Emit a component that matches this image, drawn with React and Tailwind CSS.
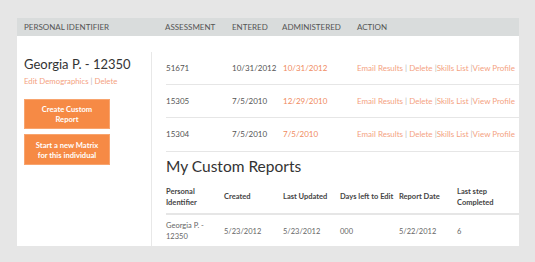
import React from "react";

const rows = [
  ["51671", "10/31/2012", "10/31/2012"],
  ["15305", "7/5/2010", "12/29/2010"],
  ["15304", "7/5/2010", "7/5/2010"],
];

function Actions() {
  return (
    <span className="text-[#f4a27f] whitespace-nowrap">
      Email Results <span className="text-[#bbb]">|</span> Delete <span className="text-[#bbb]">|</span>Skills List <span className="text-[#bbb]">|</span>View Profile
    </span>
  );
}

export default function App() {
  return (
    <div
      className="w-[535px] h-[262px] bg-[#e6e6e6] overflow-hidden pt-[18px] pl-[17px]"
      style={{ fontFamily: "Lato, 'Open Sans', sans-serif" }}
    >
      <div className="w-[502px] h-[228px] bg-white overflow-hidden flex flex-col">
        <div className="h-[18px] bg-[#d9dcdc] flex items-center text-[8px] text-[#555] uppercase shrink-0">
          <div className="w-[148px] pl-[7px]">Personal Identifier</div>
          <div className="w-[67px]">Assessment</div>
          <div className="w-[50px]">Entered</div>
          <div className="w-[75px]">Administered</div>
          <div>Action</div>
        </div>
        <div className="flex flex-1 min-h-0">
          <div className="w-[134px] shrink-0 pl-[7px] pt-[18px]">
            <div className="text-[13px] leading-[20px] text-[#333]">Georgia P. - 12350</div>
            <div className="text-[7.8px] leading-[12px] mt-[1px] text-[#f4a27f]">
              Edit Demographics <span className="text-[#bbb]">|</span> Delete
            </div>
            <div className="mt-[12px] w-[86px] h-[30px] bg-[#f68a45] border border-[#f8a46e] text-white text-[7.6px] font-bold leading-[10px] flex items-center justify-center text-center">
              Create Custom<br />Report
            </div>
            <div className="mt-[5px] w-[86px] h-[31px] bg-[#f68a45] border border-[#f8a46e] text-white text-[7.6px] font-bold leading-[10px] flex items-center justify-center text-center">
              Start a new Matrix<br />for this individual
            </div>
          </div>
          <div className="flex-1 mt-[16px] border-l border-[#e8e8e8] pl-[14px] flex flex-col text-[8px] text-[#555]">
            {rows.map((r, i) => (
              <div key={i} className="h-[34px] border-b border-[#e6e6e6] flex items-center">
                <div className="w-[66px]">{r[0]}</div>
                <div className="w-[51px]">{r[1]}</div>
                <div className="w-[74px] text-[#f08a5e]">{r[2]}</div>
                <Actions />
              </div>
            ))}
            <div className="text-[15.5px] leading-[22px] text-[#333] mt-[3px]">My Custom Reports</div>
            <div className="h-[35px] border-b-2 border-[#e6e6e6] flex items-center text-[7.5px] font-bold text-[#444] leading-[11px] mt-[4px]">
              <div className="w-[58px]">Personal<br />Identifier</div>
              <div className="w-[59px]">Created</div>
              <div className="w-[57px]">Last Updated</div>
              <div className="w-[59px]">Days left to Edit</div>
              <div className="w-[58px]">Report Date</div>
              <div>Last step<br />Completed</div>
            </div>
            <div className="h-[32px] pt-[2px] flex items-center text-[7.5px] text-[#666] leading-[11px]">
              <div className="w-[58px]">Georgia P. -<br />12350</div>
              <div className="w-[59px]">5/23/2012</div>
              <div className="w-[57px]">5/23/2012</div>
              <div className="w-[59px]">000</div>
              <div className="w-[58px]">5/22/2012</div>
              <div>6</div>
            </div>
          </div>
        </div>
      </div>
    </div>
  );
}
